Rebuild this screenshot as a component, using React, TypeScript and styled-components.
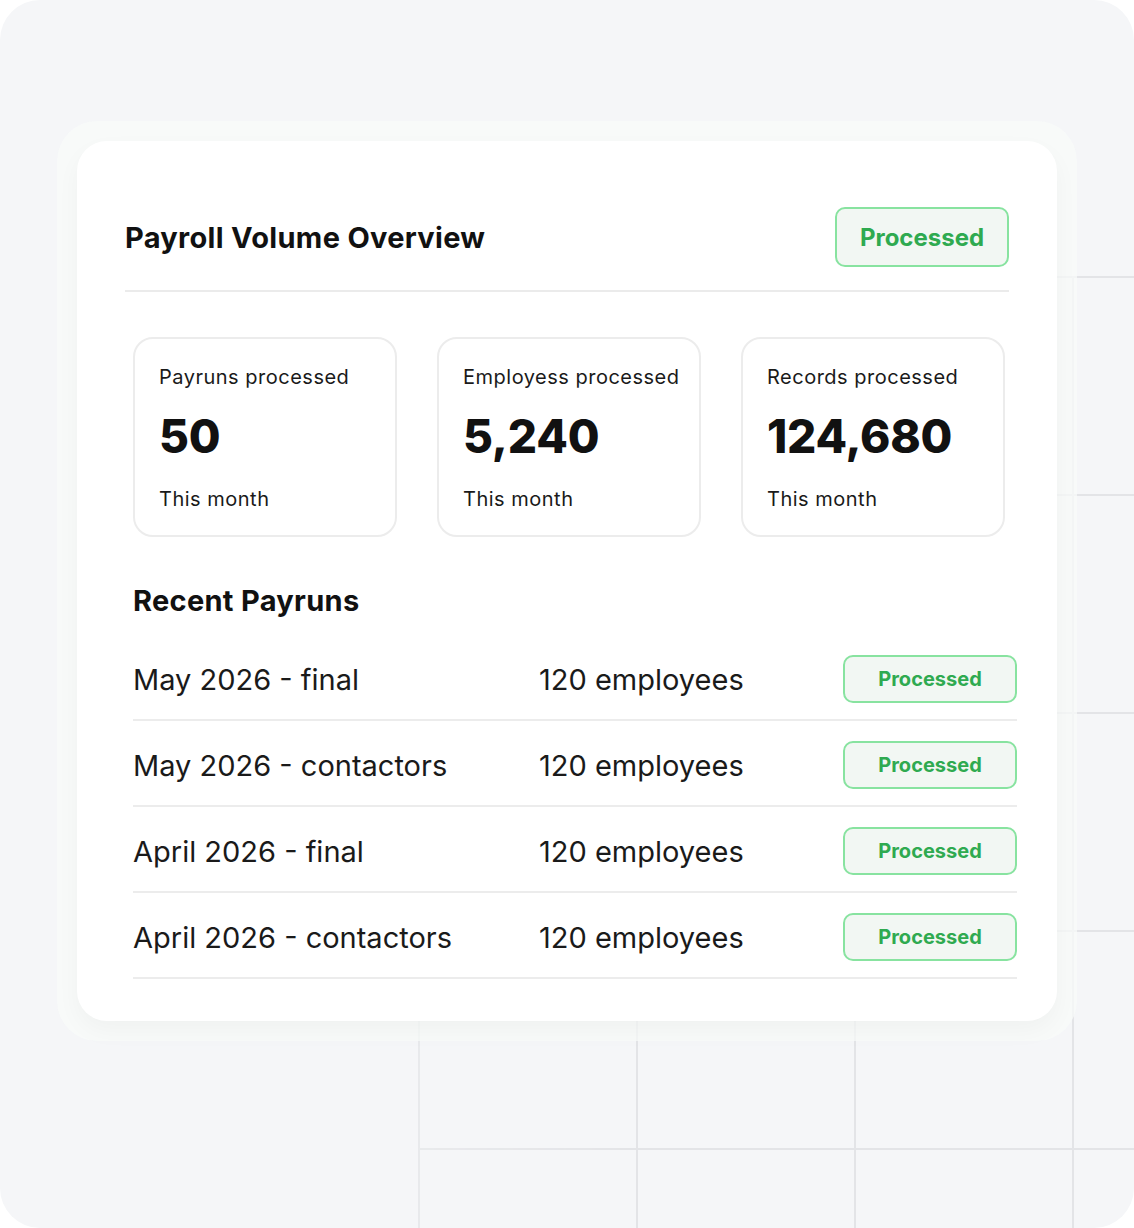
import React from "react";
import styled, { createGlobalStyle } from "styled-components";

const GlobalStyle = createGlobalStyle`
  html, body {
    margin: 0;
    padding: 0;
    background: #ffffff;
  }
  body {
    font-family: Inter, "Noto Sans", sans-serif;
    color: #151515;
  }
`;

const Panel = styled.div`
  position: relative;
  width: 1134px;
  height: 1228px;
  box-sizing: border-box;
  background: #f5f6f8;
  border-radius: 40px;
  overflow: hidden;
  padding: 121px 0 0 57px;
`;

// decorative grid lines behind the card
const GridLines = styled.div`
  position: absolute;
  left: 418px;
  top: 276px;
  right: 0;
  bottom: 0;
  background-image: linear-gradient(to right, #e3e4e7 2px, transparent 2px),
    linear-gradient(to bottom, #e3e4e7 2px, transparent 2px);
  background-size: 218px 218px;
  -webkit-mask-image: linear-gradient(to right, rgba(0, 0, 0, 0.7), #000 30%);
  mask-image: linear-gradient(to right, rgba(0, 0, 0, 0.7), #000 30%);
`;

const Halo = styled.div`
  position: relative;
  width: 1020px;
  box-sizing: border-box;
  padding: 20px;
  border-radius: 40px;
  background: rgba(248, 251, 249, 0.75);
`;

const Card = styled.div`
  width: 980px;
  box-sizing: border-box;
  background: #ffffff;
  border-radius: 30px;
  padding: 66px 0 42px;
  box-shadow: 0 10px 24px rgba(0, 0, 0, 0.035);
`;

const Header = styled.div`
  display: flex;
  align-items: center;
  justify-content: space-between;
  margin: 0 48px;
  padding-bottom: 23px;
  border-bottom: 2px solid #ebebeb;
`;

const Title = styled.h2`
  margin: 0;
  font-size: 29px;
  font-weight: 700;
  letter-spacing: 0.3px;
  color: #111111;
`;

const Badge = styled.span<{ $size?: "lg" | "sm" }>`
  display: inline-flex;
  align-items: center;
  justify-content: center;
  box-sizing: border-box;
  width: 174px;
  height: ${p => (p.$size === "lg" ? "60px" : "48px")};
  border: 2px solid #88e3a0;
  border-radius: 10px;
  background: #f2f7f3;
  color: #2faa50;
  font-size: ${p => (p.$size === "lg" ? "24px" : "20px")};
  font-weight: 700;
`;

const Body = styled.div`
  padding: 0 40px 0 56px;
`;

const Stats = styled.div`
  display: grid;
  grid-template-columns: repeat(3, 264px);
  gap: 40px;
  margin-top: 45px;
`;

const StatCard = styled.div`
  box-sizing: border-box;
  height: 200px;
  border: 2px solid #ececec;
  border-radius: 20px;
  padding: 24px 16px 24px 24px;
  display: flex;
  flex-direction: column;
  white-space: nowrap;
`;

const StatLabel = styled.span`
  font-size: 20px;
  line-height: 28px;
  letter-spacing: 0.5px;
  color: #1a1a1a;
`;

const StatValue = styled.span`
  margin-top: 17px;
  font-size: 46px;
  line-height: 56px;
  font-weight: 800;
  letter-spacing: -0.2px;
  color: #111111;
`;

const StatNote = styled.span`
  margin-top: 21px;
  font-size: 20px;
  line-height: 28px;
  letter-spacing: 0.5px;
  color: #1a1a1a;
`;

const SectionTitle = styled.h3`
  margin: 46px 0 0;
  font-size: 29px;
  line-height: 36px;
  font-weight: 700;
  letter-spacing: 0.3px;
  color: #111111;
`;

const List = styled.div`
  margin-top: 16px;
`;

const Row = styled.div`
  display: grid;
  grid-template-columns: 406px 1fr auto;
  align-items: center;
  box-sizing: border-box;
  height: 86px;
  padding-top: 4px;
  border-bottom: 2px solid #ececec;
`;

const Cell = styled.span`
  font-size: 29px;
  font-weight: 400;
  white-space: nowrap;
  color: #1a1a1a;
`;

interface IPayrun {
  name: string;
  employees: number;
}

const stats = [
  { label: "Payruns processed", value: "50" },
  { label: "Employess processed", value: "5,240" },
  { label: "Records processed", value: "124,680" }
];

const payruns: IPayrun[] = [
  { name: "May 2026 - final", employees: 120 },
  { name: "May 2026 - contactors", employees: 120 },
  { name: "April 2026 - final", employees: 120 },
  { name: "April 2026 - contactors", employees: 120 }
];

const App: React.FC = () => {
  return (
    <>
      <GlobalStyle />
      <Panel>
        <GridLines />
        <Halo>
          <Card>
            <Header>
              <Title>Payroll Volume Overview</Title>
              <Badge $size="lg">Processed</Badge>
            </Header>
            <Body>
              <Stats>
                {stats.map(s => (
                  <StatCard key={s.label}>
                    <StatLabel>{s.label}</StatLabel>
                    <StatValue>{s.value}</StatValue>
                    <StatNote>This month</StatNote>
                  </StatCard>
                ))}
              </Stats>
              <SectionTitle>Recent Payruns</SectionTitle>
              <List>
                {payruns.map(p => (
                  <Row key={p.name}>
                    <Cell>{p.name}</Cell>
                    <Cell>{p.employees} employees</Cell>
                    <Badge>Processed</Badge>
                  </Row>
                ))}
              </List>
            </Body>
          </Card>
        </Halo>
      </Panel>
    </>
  );
};

export default App;
